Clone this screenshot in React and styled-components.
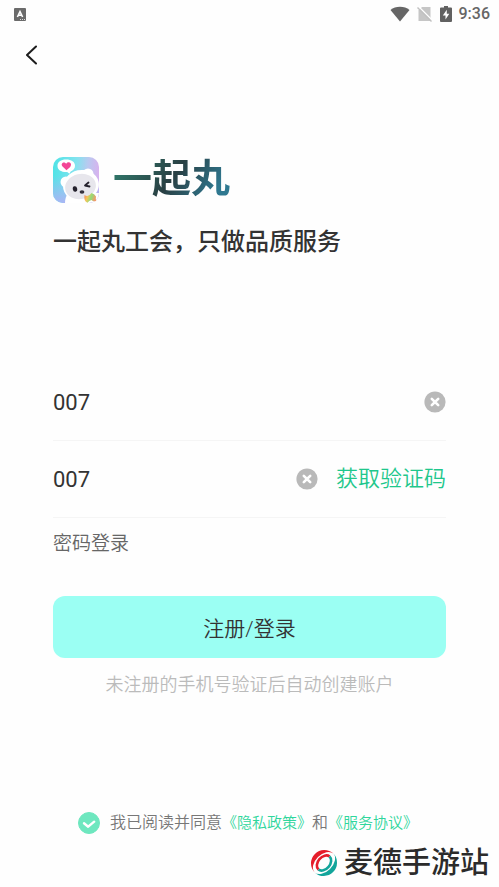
import React, { useState } from "react";
import styled, { createGlobalStyle } from "styled-components";

const GlobalStyle = createGlobalStyle`
  * {
    box-sizing: border-box;
  }
  body {
    margin: 0;
    background: #fefefe;
    color: #333;
    font-family: Roboto, "Noto Sans CJK SC", sans-serif;
  }
  button, input {
    font-family: inherit;
    color: inherit;
    margin: 0;
    padding: 0;
    border: 0;
    background: none;
  }
  button {
    cursor: pointer;
  }
  svg {
    display: block;
  }
`;

const Page = styled.div`
  display: flex;
  flex-direction: column;
  min-height: 100vh;
`;

const StatusBar = styled.div`
  display: flex;
  align-items: center;
  height: 28px;
  padding: 0 9px 0 14px;
  color: #666;
`;

const StatusIcons = styled.div`
  display: flex;
  align-items: center;
  gap: 7px;
  margin-left: auto;
`;

const Clock = styled.span`
  font-size: 16px;
  font-weight: 500;
  line-height: 20px;
`;

const NavBar = styled.header`
  display: flex;
  align-items: center;
  height: 54px;
  padding: 0 20px;
`;

const BackButton = styled.button`
  display: flex;
  align-items: center;
  justify-content: center;
  width: 24px;
  height: 32px;
`;

const Main = styled.main`
  padding: 73px 53px 0;
`;

const Brand = styled.div`
  display: flex;
  align-items: flex-end;
  gap: 14px;
`;

const AppName = styled.h1`
  margin: 0;
  font-size: 39px;
  font-weight: 700;
  line-height: 48px;
  color: transparent;
  background: linear-gradient(125deg, #2f7568 10%, #293f43 50%, #2f7890 85%);
  background-clip: text;
`;

const Slogan = styled.p`
  margin: 23px 0 106px;
  font-size: 24px;
  font-weight: 500;
  line-height: 32px;
  white-space: nowrap;
`;

const Field = styled.div`
  display: flex;
  align-items: center;
  height: 77px;
  border-bottom: 1px solid #f5f5f5;
`;

const TextInput = styled.input`
  flex: 1;
  min-width: 0;
  height: 40px;
  font-size: 22px;
  outline: none;
`;

const ClearButton = styled.button`
  width: 22px;
  height: 22px;
`;

const CodeButton = styled.button`
  margin-left: 18px;
  font-size: 22px;
  font-weight: 350;
  line-height: 32px;
  color: #1fc78c;
`;

const PasswordLink = styled.a`
  display: block;
  width: max-content;
  margin: 12px 0 38px;
  font-size: 19px;
  font-weight: 350;
  line-height: 28px;
  color: #666;
  text-decoration: none;
`;

const SubmitButton = styled.button`
  display: block;
  width: 100%;
  height: 62px;
  border-radius: 12px;
  background: #9bfff3;
  font-size: 21px;
  font-weight: 350;
`;

const Hint = styled.p`
  margin: 13px 0 0;
  font-size: 18px;
  font-weight: 350;
  line-height: 28px;
  color: #bbb;
  text-align: center;
  white-space: nowrap;
`;

const Agreement = styled.div`
  display: flex;
  align-items: center;
  justify-content: center;
  gap: 10px;
  margin-top: auto;
  padding: 24px 3px 0 0;
  font-size: 16px;
  font-weight: 350;
  line-height: 24px;
  color: #777;
  white-space: nowrap;
`;

const AgreementLink = styled.a`
  font-size: 15px;
  color: #2fd69c;
  text-decoration: none;
`;

const CheckBox = styled.span`
  display: grid;

  > * {
    grid-area: 1 / 1;
  }
  svg {
    pointer-events: none;
  }
`;

const CheckInput = styled.input`
  appearance: none;
  width: 22px;
  height: 22px;
  border: 1px solid #6ee7bf;
  border-radius: 50%;
  cursor: pointer;

  &:checked {
    background: #6ee7bf;
  }
`;

const SiteMark = styled.footer`
  display: flex;
  align-items: center;
  justify-content: flex-end;
  gap: 6px;
  padding: 8px 10px 4px 0;
  font-size: 29px;
  font-weight: 500;
  line-height: 40px;
  color: #2b2b2b;
`;

const InputMethodIcon = () => (
  <svg width="12" height="13" viewBox="0 0 12 13" aria-hidden="true">
    <rect width="12" height="13" rx="1" fill="#6b6b6b" />
    <path d="M3.4 9 6 3.5 8.6 9M4.3 7.3h3.4" fill="none" stroke="#fff" strokeWidth="1.6" />
    <path d="M6 11.5h1M8 11.5h1M10 11.5h1" stroke="#ddd" />
  </svg>
);

const WifiIcon = () => (
  <svg width="20" height="16" viewBox="0 0 20 16" aria-hidden="true">
    <path d="M.5 4C3 1.8 6.3.7 10 .7S17 1.8 19.5 4L10 15.5z" fill="#666" />
  </svg>
);

const NoSimIcon = () => (
  <svg width="16" height="16" viewBox="0 0 16 16" aria-hidden="true">
    <path d="M5 1h8.5v14H1.5V4.5z" fill="#c6c6c6" />
    <path d="M1.5.5 16 15" stroke="#fefefe" strokeWidth="1.4" />
    <path d="M.5 1.5 14.5 15.5" stroke="#c0c0c0" strokeWidth="1.4" />
  </svg>
);

const BatteryIcon = () => (
  <svg width="12" height="16" viewBox="0 0 12 16" aria-hidden="true">
    <path d="M4 0h4v1.5h3q1 0 1 1V15q0 1-1 1H1q-1 0-1-1V2.5q0-1 1-1h3z" fill="#616161" />
    <path d="M6.8 3.8 2.8 9.5h2.7v4L9.3 7.8H6.8z" fill="#fff" />
  </svg>
);

const BackIcon = () => (
  <svg width="12" height="20" viewBox="0 0 12 20" aria-hidden="true">
    <path
      d="M10 1.5 1 10l9 8.5"
      fill="none"
      stroke="#1d1d1d"
      strokeWidth="2"
      strokeLinecap="round"
      strokeLinejoin="round"
    />
  </svg>
);

const ClearIcon = () => (
  <svg width="22" height="22" viewBox="0 0 22 22" aria-hidden="true">
    <circle cx="11" cy="11" r="10.6" fill="#b9b9b9" />
    <path d="m7.8 7.8 6.4 6.4m0-6.4-6.4 6.4" stroke="#fff" strokeWidth="2.6" strokeLinecap="round" />
  </svg>
);

const TickIcon = () => (
  <svg width="22" height="22" viewBox="0 0 22 22" aria-hidden="true">
    <path
      d="m6 11.3 4.2 3.4 6-5"
      fill="none"
      stroke="#fff"
      strokeWidth="2.4"
      strokeLinecap="round"
      strokeLinejoin="round"
    />
  </svg>
);

const PandaLogo = () => (
  <svg width="46" height="46" viewBox="0 0 46 46" aria-hidden="true">
    <defs>
      <linearGradient id="sky" x1="0" y1=".2" x2="1" y2=".3">
        <stop offset="0" stopColor="#4fe3e6" />
        <stop offset=".5" stopColor="#83e3ef" />
        <stop offset=".75" stopColor="#b9c9f0" />
        <stop offset="1" stopColor="#d8b2ee" />
      </linearGradient>
      <linearGradient id="shade" x1="0" y1="0" x2="0" y2="1">
        <stop offset=".4" stopColor="#a9b5f4" stopOpacity="0" />
        <stop offset="1" stopColor="#a9b5f4" />
      </linearGradient>
      <linearGradient id="candy" x1="0" y1="0" x2="1" y2=".3">
        <stop offset="0" stopColor="#f27b62" />
        <stop offset=".35" stopColor="#f5c65a" />
        <stop offset=".65" stopColor="#91dc78" />
        <stop offset="1" stopColor="#f29a6a" />
      </linearGradient>
      <clipPath id="tile">
        <rect width="46" height="46" rx="10" />
      </clipPath>
    </defs>
    <g clipPath="url(#tile)">
      <rect width="46" height="46" fill="url(#sky)" />
      <rect width="46" height="46" fill="url(#shade)" />
      <path d="M12 46c0-4 1-7 3-10h31v10z" fill="#fff" />
    </g>
    <circle cx="13" cy="25" r="5.5" fill="#fff" />
    <circle cx="35" cy="17" r="5.5" fill="#fff" />
    <ellipse cx="28" cy="28.5" rx="18" ry="15.5" fill="#fff" transform="rotate(-12 28 28.5)" />
    <ellipse cx="27.5" cy="29.5" rx="15.5" ry="12.5" fill="#e7e6ec" transform="rotate(-12 27.5 29.5)" />
    <path d="M13 2.5c5.5 0 9 2.5 9 6.2 0 2.8-1.7 4.7-4.3 5.7l-1.2 2.4-2.3-1.8C8 15.2 4.5 12.8 4.5 8.7c0-3.7 3.5-6.2 8.500-6.2z" fill="#fff" />
    <path d="m13.5 13.2-4.2-4c-2-2.7 1.6-5.3 3.9-2.4 1.8-3 5.900-1.2 4.600 2-.6 1.6-2.5 2.8-4.3 4.4z" fill="#f34696" />
    <ellipse cx="22" cy="32" rx="2.200" ry="2.800" fill="#24212c" transform="rotate(-12 22 32)" />
    <path d="m35.500 25.500-3.500 3 4.500 1" fill="none" stroke="#24212c" strokeWidth="1.800" strokeLinecap="round" strokeLinejoin="round" />
    <ellipse cx="29" cy="35" rx="2.400" ry="1.700" fill="#35313d" />
    <path d="M31.500 38q4 2.500 7-2 3 .5 4.500 3.500-.5 2 .3 4.200-2.800 1.500-4.800-.7-2.500.5-4 2.700-4-1.200-3-7.700z" fill="url(#candy)" />
  </svg>
);

const SiteLogo = () => (
  <svg width="28" height="28" viewBox="0 0 28 28" aria-hidden="true">
    <g fill="#e51d2a" stroke="#e51d2a">
      <path d="M4.6 23.4A13.3 13.3 0 0 1 23.4 4.600 8.800 13.300 45 0 0 4.600 23.400z" stroke="none" />
      <path d="M8.500 20.500A6 8.500 40 0 1 19.500 7.500" fill="none" strokeWidth="2.600" />
    </g>
    <g fill="#12a59b" stroke="#12a59b">
      <path d="M23.400 4.600A13.300 13.300 0 0 1 4.600 23.400 8.800 13.300 45 0 0 23.400 4.600z" stroke="none" />
      <path d="M19.500 7.500A6 8.500 40 0 1 8.500 20.500" fill="none" strokeWidth="2.600" />
    </g>
  </svg>
);

const App = () => {
  const [phone, setPhone] = useState("007");
  const [code, setCode] = useState("007");
  const [agreed, setAgreed] = useState(true);

  return (
    <Page>
      <GlobalStyle />
      <StatusBar>
        <InputMethodIcon />
        <StatusIcons>
          <WifiIcon />
          <NoSimIcon />
          <BatteryIcon />
          <Clock>9:36</Clock>
        </StatusIcons>
      </StatusBar>
      <NavBar>
        <BackButton type="button" aria-label="返回">
          <BackIcon />
        </BackButton>
      </NavBar>
      <Main>
        <Brand>
          <PandaLogo />
          <AppName>一起丸</AppName>
        </Brand>
        <Slogan>一起丸工会，只做品质服务</Slogan>
        <form onSubmit={e => e.preventDefault()}>
          <Field>
            <TextInput
              type="tel"
              aria-label="手机号"
              value={phone}
              onChange={e => setPhone(e.target.value)}
            />
            <ClearButton type="button" aria-label="清除手机号" onClick={() => setPhone("")}>
              <ClearIcon />
            </ClearButton>
          </Field>
          <Field>
            <TextInput
              type="text"
              inputMode="numeric"
              aria-label="验证码"
              value={code}
              onChange={e => setCode(e.target.value)}
            />
            <ClearButton type="button" aria-label="清除验证码" onClick={() => setCode("")}>
              <ClearIcon />
            </ClearButton>
            <CodeButton type="button">获取验证码</CodeButton>
          </Field>
          <PasswordLink href="#password">密码登录</PasswordLink>
          <SubmitButton type="submit">注册/登录</SubmitButton>
        </form>
        <Hint>未注册的手机号验证后自动创建账户</Hint>
      </Main>
      <Agreement>
        <CheckBox>
          <CheckInput
            id="agree"
            type="checkbox"
            checked={agreed}
            onChange={e => setAgreed(e.target.checked)}
          />
          {agreed && <TickIcon />}
        </CheckBox>
        <div>
          <label htmlFor="agree">我已阅读并同意</label>
          <AgreementLink href="#privacy">《隐私政策》</AgreementLink>
          和
          <AgreementLink href="#terms">《服务协议》</AgreementLink>
        </div>
      </Agreement>
      <SiteMark>
        <SiteLogo />
        <span>麦德手游站</span>
      </SiteMark>
    </Page>
  );
};

export default App;
